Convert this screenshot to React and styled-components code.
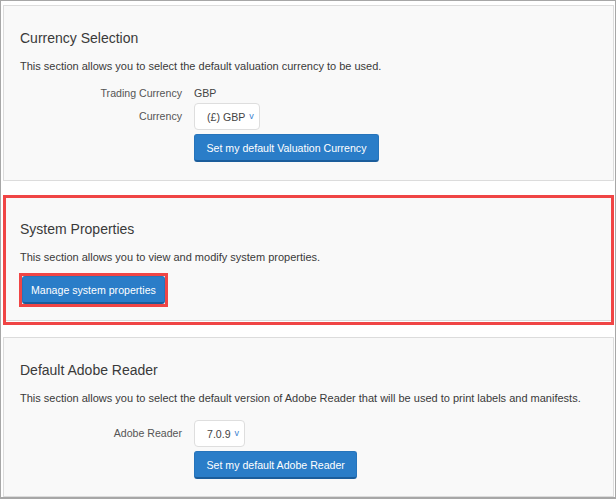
import React from "react";
import styled, { createGlobalStyle } from "styled-components";

const Global = createGlobalStyle`
  html, body { margin: 0; padding: 0; background: #fff; }
  body { font-family: "Liberation Sans", Arial, sans-serif; color: #333; }
`;

const Frame = styled.div`
  box-sizing: border-box;
  width: 616px;
  height: 499px;
  border: 1px solid #a7a7a7;
  border-bottom-width: 2px;
  padding: 4px 1px 0 2px;
  display: flex;
  flex-direction: column;
  background: #fff;
`;

const Panel = styled.section`
  box-sizing: border-box;
  background: #f9f9f9;
  border: 1px solid #dcdcdc;
  padding: 22px 16px ${(p) => p.$bottom || 18}px 16px;
  margin-top: ${(p) => p.$top || 0}px;
  display: flex;
  flex-direction: column;
  align-items: flex-start;
`;

const Highlight = styled.div`
  margin-top: 14px;
  border: 3px solid #f04545;
  padding-bottom: 1px;
  background: #fff;
`;

const InnerPanel = styled.section`
  background: #f9f9f9;
  border-bottom: 1px solid #d9d9d9;
  padding: 21px 14px 13px 14px;
  display: flex;
  flex-direction: column;
  align-items: flex-start;
`;

const Heading = styled.h2`
  margin: 0;
  font-size: 14px;
  line-height: 20px;
  font-weight: normal;
  color: #3a3a3a;
`;

const Text = styled.p`
  margin: 10px 0 0 0;
  font-size: 11px;
  line-height: 16px;
  color: #3a3a3a;
`;

const Form = styled.div`
  display: grid;
  grid-template-columns: 162px auto;
  column-gap: 12px;
  align-items: center;
  margin-top: ${(p) => p.$top}px;
`;

const Label = styled.div`
  text-align: right;
  font-size: 10.6px;
  color: #555;
  line-height: ${(p) => p.$h || 20}px;
`;

const Value = styled.div`
  font-size: 10.6px;
  color: #444;
  line-height: 20px;
`;

const Select = styled.div`
  box-sizing: border-box;
  height: 27px;
  display: inline-flex;
  align-items: center;
  justify-self: start;
  gap: 4px;
  padding: 0 5px 0 12px;
  background: #fff;
  border: 1px solid #dedede;
  border-radius: 4px;
  font-size: 10.6px;
  color: #444;
`;

const Chevron = styled.span`
  font-size: 9px;
  color: #3b7fcf;
  line-height: 1;
`;

const Button = styled.button`
  box-sizing: border-box;
  height: 28px;
  justify-self: start;
  grid-column: ${(p) => (p.$col ? p.$col : "auto")};
  margin-top: ${(p) => p.$mt || 0}px;
  padding: 0 ${(p) => p.$px || 11.5}px;
  background: #2a7dc8;
  border: 1px solid #2674bb;
  border-bottom: 2px solid #1b5d9b;
  border-radius: 3px;
  color: #fff;
  font-family: "Liberation Sans", Arial, sans-serif;
  font-size: 10.6px;
  cursor: pointer;
  white-space: nowrap;
`;

const ButtonMark = styled.div`
  margin-top: 8px;
  margin-left: -1px;
  border: 3px solid #f04545;
  display: flex;
`;

export default function App() {
  return (
    <>
      <Global />
      <Frame>
        <Panel>
          <Heading>Currency Selection</Heading>
          <Text>This section allows you to select the default valuation currency to be used.</Text>
          <Form $top={9}>
            <Label>Trading Currency</Label>
            <Value>GBP</Value>
            <Label $h={27}>Currency</Label>
            <Select>
              (£) GBP <Chevron>v</Chevron>
            </Select>
            <Button $col="2" $mt={4}>Set my default Valuation Currency</Button>
          </Form>
        </Panel>

        <Highlight>
          <InnerPanel>
            <Heading>System Properties</Heading>
            <Text>This section allows you to view and modify system properties.</Text>
            <ButtonMark>
              <Button $px={8}>Manage system properties</Button>
            </ButtonMark>
          </InnerPanel>
        </Highlight>

        <Panel $top={12} $bottom={17}>
          <Heading>Default Adobe Reader</Heading>
          <Text>This section allows you to select the default version of Adobe Reader that will be used to print labels and manifests.</Text>
          <Form $top={14}>
            <Label $h={27}>Adobe Reader</Label>
            <Select>
              7.0.9 <Chevron>v</Chevron>
            </Select>
            <Button $col="2" $mt={4}>Set my default Adobe Reader</Button>
          </Form>
        </Panel>
      </Frame>
    </>
  );
}
